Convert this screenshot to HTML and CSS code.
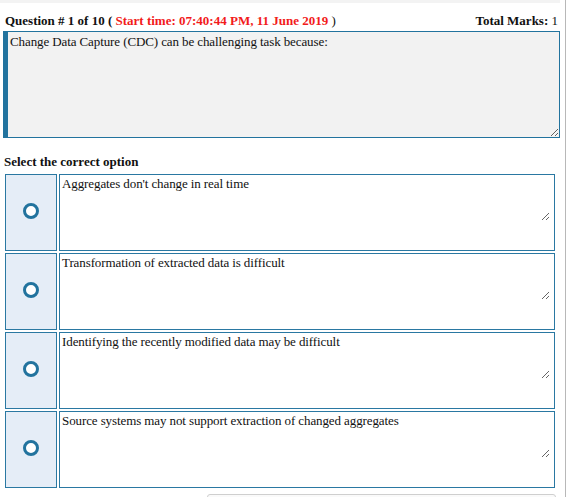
FILE: index.html
```html
<!DOCTYPE html>
<html lang="en">
<head>
    <meta charset="UTF-8">
    <meta name="viewport" content="width=device-width, initial-scale=1.0">
    <title>Quiz</title>
    <link rel="stylesheet" href="styles.css">
</head>
<body>
    <div class="page">
        <div class="top-strip"></div>
        <div class="q-head">
            <span><b>Question # 1 of 10 (</b> <b class="start">Start time: 07:40:44 PM, 11 June 2019</b> )</span>
            <span><b>Total Marks:</b> 1</span>
        </div>
        <textarea class="q-text" readonly>Change Data Capture (CDC) can be challenging task because:</textarea>

        <h4 class="select-title">Select the correct option</h4>
        <div class="options">
            <div class="opt">
                <label class="pick"><span class="ring"></span></label>
                <div class="opt-box"><textarea class="opt-text" readonly>Aggregates don't change in real time</textarea></div>
            </div>
            <div class="opt">
                <label class="pick"><span class="ring"></span></label>
                <div class="opt-box"><textarea class="opt-text" readonly>Transformation of extracted data is difficult</textarea></div>
            </div>
            <div class="opt">
                <label class="pick"><span class="ring"></span></label>
                <div class="opt-box"><textarea class="opt-text" readonly>Identifying the recently modified data may be difficult</textarea></div>
            </div>
            <div class="opt">
                <label class="pick"><span class="ring"></span></label>
                <div class="opt-box"><textarea class="opt-text" readonly>Source systems may not support extraction of changed aggregates</textarea></div>
            </div>
        </div>
        <div class="footer-box"></div>
    </div>
</body>
</html>
```

FILE: styles.css
```css
body {
    margin: 0;
    font-family: "Liberation Serif", "Times New Roman", serif;
    font-size: 13px;
    color: #111;
    background: #fff;
}
.page {
    width: 565px;
    height: 497px;
    border-right: 1px solid #b8b8b8;
    overflow: hidden;
}
.top-strip {
    width: 560px;
    height: 3px;
    background: #f3f3f3;
}
.q-head {
    display: flex;
    justify-content: space-between;
    width: 553px;
    padding: 10px 0 0 5px;
    height: 18px;
}
.start {
    color: #f21b1b;
}
textarea {
    font-family: "Liberation Serif", "Times New Roman", serif;
    font-size: 13px;
    letter-spacing: -0.1px;
    color: #111;
    box-sizing: border-box;
    margin: 0;
    display: block;
    outline: none;
}
.q-text {
    margin-left: 3px;
    width: 557px;
    height: 107px;
    border: 1px solid #22739e;
    border-left: 5px solid #22739e;
    background: #f2f2f2;
    padding: 2px 2px;
}
.select-title {
    margin: 0;
    padding: 16px 0 0 4px;
    height: 20px;
    font-size: 13px;
}
.options {
    display: flex;
    flex-direction: column;
    gap: 2px;
    padding-left: 5px;
}
.opt {
    display: flex;
    gap: 2px;
    height: 77px;
}
.pick {
    width: 52px;
    box-sizing: border-box;
    border: 1px solid #2a78a2;
    background: #e5edf7;
    display: flex;
    align-items: center;
    justify-content: center;
    padding-bottom: 3px;
}
.ring {
    width: 10px;
    height: 10px;
    border: 3.5px solid #22739e;
    border-radius: 50%;
    background: #fff;
}
.opt-box {
    width: 496px;
    box-sizing: border-box;
    border: 1px solid #2a78a2;
    background: #fff;
}
.opt-text {
    width: 490px;
    height: 46px;
    border: none;
    background: #fff;
    padding: 1px 2px;
}
.footer-box {
    margin: 6px 0 0 207px;
    width: 347px;
    height: 20px;
    border: 1px solid #cfcfcf;
    border-radius: 3px;
    background: #fafafa;
}
```
